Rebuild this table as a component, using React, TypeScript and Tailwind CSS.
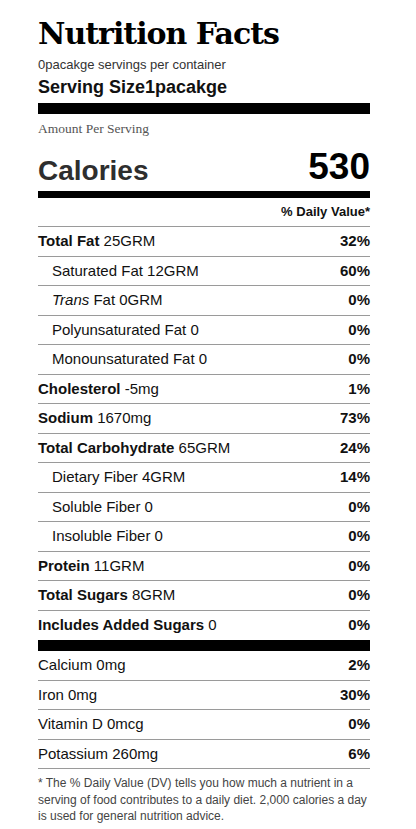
const rows: { label: string; amount: string; dv: string; bold?: boolean; indent?: boolean; italic?: string }[] = [
  { label: 'Total Fat', amount: '25GRM', dv: '32%', bold: true },
  { label: 'Saturated Fat', amount: '12GRM', dv: '60%', indent: true },
  { label: 'Fat', amount: '0GRM', dv: '0%', indent: true, italic: 'Trans' },
  { label: 'Polyunsaturated Fat', amount: '0', dv: '0%', indent: true },
  { label: 'Monounsaturated Fat', amount: '0', dv: '0%', indent: true },
  { label: 'Cholesterol', amount: '-5mg', dv: '1%', bold: true },
  { label: 'Sodium', amount: '1670mg', dv: '73%', bold: true },
  { label: 'Total Carbohydrate', amount: '65GRM', dv: '24%', bold: true },
  { label: 'Dietary Fiber', amount: '4GRM', dv: '14%', indent: true },
  { label: 'Soluble Fiber', amount: '0', dv: '0%', indent: true },
  { label: 'Insoluble Fiber', amount: '0', dv: '0%', indent: true },
  { label: 'Protein', amount: '11GRM', dv: '0%', bold: true },
  { label: 'Total Sugars', amount: '8GRM', dv: '0%', bold: true },
  { label: 'Includes Added Sugars', amount: '0', dv: '0%', bold: true },
]

const minerals = [
  { label: 'Calcium', amount: '0mg', dv: '2%' },
  { label: 'Iron', amount: '0mg', dv: '30%' },
  { label: 'Vitamin D', amount: '0mcg', dv: '0%' },
  { label: 'Potassium', amount: '260mg', dv: '6%' },
]

const sans = "font-['Liberation_Sans',Arial,sans-serif]"

export default function App() {
  return (
    <div className={`min-h-[829px] bg-white text-[#111] ${sans}`}>
      <div className="ml-[38px] w-[332px] pt-[16px]">
        <h1 className="font-['DejaVu_Serif',serif] font-bold text-[30px] leading-[36px] tracking-[-1px] text-black">Nutrition Facts</h1>
        <p className="text-[13px] leading-[16px] text-[#333] mt-[5px]">0pacakge servings per container</p>
        <p className="text-[18px] leading-[22px] font-bold mt-[2.5px]">Serving Size1pacakge</p>
        <div className="h-[11px] bg-black mt-[5.5px]" />
        <p className="font-['Liberation_Serif',serif] text-[13.5px] leading-[16px] text-[#555] mt-[6.5px]">Amount Per Serving</p>
        <div className="flex items-end justify-between h-[50.5px]">
          <span className="text-[28px] leading-[32px] font-bold text-[#2e2e2e]">Calories</span>
          <span className="text-[37px] leading-[40px] font-bold text-black">530</span>
        </div>
        <div className="h-[6.5px] bg-black mt-[4px]" />
        <div className="flex justify-end items-center h-[29.5px] border-b-[1.5px] border-[#9a9a9a]">
          <span className="text-[13px] font-bold">% Daily Value*</span>
        </div>
        {rows.map((r, i) => (
          <div
            key={r.label + i}
            className={`flex justify-between items-center h-[29.5px] text-[15px] ${i === rows.length - 1 ? '' : 'border-b-[1.5px] border-[#9a9a9a]'}`}
          >
            <span className={r.indent ? 'pl-[14px]' : ''}>
              {r.italic && <em>{r.italic} </em>}
              {r.bold ? <b>{r.label}</b> : r.label} {r.amount}
            </span>
            <b>{r.dv}</b>
          </div>
        ))}
        <div className="h-[11px] bg-black" />
        {minerals.map(m => (
          <div key={m.label} className="flex justify-between items-center h-[29.5px] text-[15px] border-b-[1.5px] border-[#9a9a9a]">
            <span>{m.label} {m.amount}</span>
            <b>{m.dv}</b>
          </div>
        ))}
        <p className="text-[12px] leading-[16.5px] text-[#444] mt-[6px]">
          * The % Daily Value (DV) tells you how much a nutrient in a serving of food contributes to a daily diet. 2,000 calories a day is used for general nutrition advice.
        </p>
      </div>
    </div>
  )
}
